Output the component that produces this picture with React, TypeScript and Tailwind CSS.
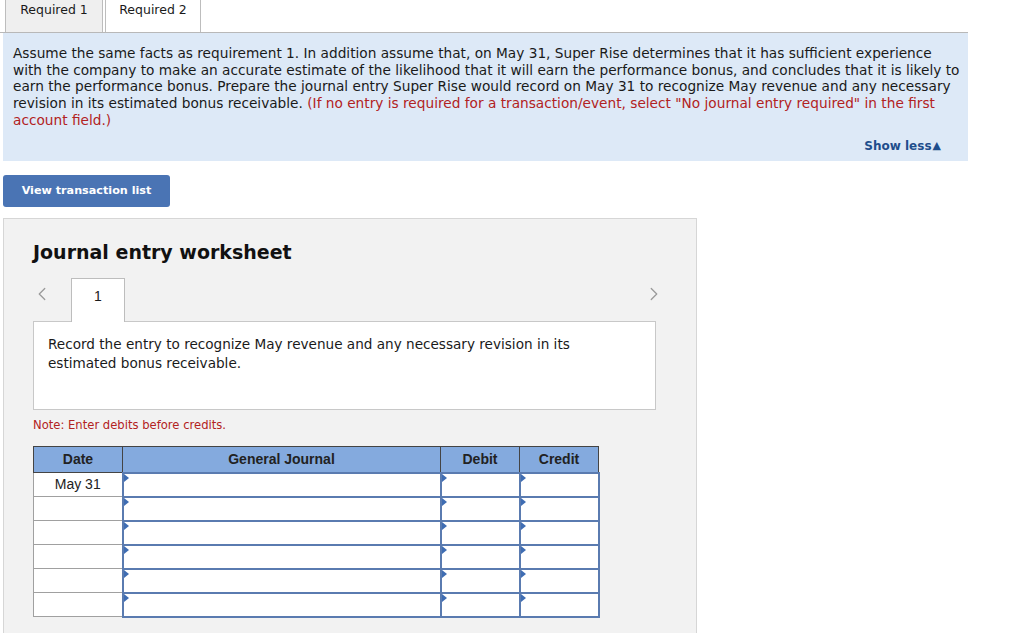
import { ChevronLeft, ChevronRight } from 'lucide-react'

const verdana = { fontFamily: '"DejaVu Sans", Verdana, sans-serif' }

function InputCell({ w }: { w: string }) {
  return (
    <td className={`${w} h-[24px] p-0 border-2 border-[#5a7bb0] bg-white relative`}>
      <span className="absolute left-0 top-0 w-0 h-0 border-t-[4px] border-b-[4px] border-l-[5px] border-t-transparent border-b-transparent border-l-[#3f6db3]" />
    </td>
  )
}

export default function App() {
  const rows = ['May 31', '', '', '', '', '']

  return (
    <div className="w-[1024px] h-[633px] overflow-hidden bg-white text-[#1a1a1a]" style={verdana}>
      {/* Tabs */}
      <div className="flex items-end h-[33px] pl-[5px] border-b border-[#b8b8b8] w-[968px]">
        <div className="w-[98px] h-[33px] flex justify-center pt-[1px] bg-[#efefef] border border-b-0 border-[#bdbdbd] text-[12.5px]">
          Required 1
        </div>
        <div className="ml-[2px] w-[96px] h-[33px] flex justify-center pt-[1px] bg-white border border-b-0 border-[#bdbdbd] text-[12.5px]">
          Required 2
        </div>
      </div>

      {/* Instructions */}
      <div className="ml-[3px] w-[965px] h-[128px] bg-[#dde9f7] pl-[10px] pr-[10px] pt-[12px] relative">
        <p className="text-[13.7px] leading-[16.7px] whitespace-nowrap">
          Assume the same facts as requirement 1. In addition assume that, on May 31, Super Rise determines that it has sufficient experience
          <br />
          with the company to make an accurate estimate of the likelihood that it will earn the performance bonus, and concludes that it is likely to
          <br />
          earn the performance bonus. Prepare the journal entry Super Rise would record on May 31 to recognize May revenue and any necessary
          <br />
          revision in its estimated bonus receivable.{' '}
          <span className="text-[#b22222]">(If no entry is required for a transaction/event, select "No journal entry required" in the first</span>
          <br />
          <span className="text-[#b22222]">account field.)</span>
        </p>
        <div className="absolute right-[27px] top-[104px] text-[12px] font-bold text-[#1f4e8c] flex items-center gap-[1px]">
          Show less<span className="text-[11px]">▲</span>
        </div>
      </div>

      {/* Button */}
      <button className="mt-[14px] ml-[3px] w-[167px] h-[32px] rounded-[3px] bg-[#4a74b4] text-white text-[11.2px] font-bold">
        View transaction list
      </button>

      {/* Worksheet */}
      <div className="mt-[11px] ml-[3px] w-[694px] h-[420px] bg-[#f2f2f2] border border-[#d6d6d6] pl-[29px] pt-[20px]">
        <h2 className="text-[19px] font-bold leading-[26px] text-[#111]">Journal entry worksheet</h2>

        <div className="mt-[13px] flex items-end w-[623px] h-[43px] relative">
          <ChevronLeft className="absolute left-[-2px] top-[5px] text-[#9a9a9a]" size={22} strokeWidth={1.4} />
          <div
            className="ml-[38px] w-[54px] h-[44px] -mb-px relative z-10 bg-white border border-b-0 border-[#bdbdbd] flex items-center justify-center text-[14px] pb-[9px]"
            style={{ fontFamily: '"Liberation Sans", Arial, sans-serif' }}
          >
            1
          </div>
          <ChevronRight className="absolute right-[-9px] top-[5px] text-[#9a9a9a]" size={22} strokeWidth={1.4} />
        </div>

        <div className="w-[623px] h-[89px] bg-white border border-[#c8c8c8] pl-[14px] pt-[13px] text-[13.6px] leading-[19px]">
          Record the entry to recognize May revenue and any necessary revision in its
          <br />
          estimated bonus receivable.
        </div>

        <p className="mt-[7px] text-[11.6px] text-[#b22222] leading-[16px]">Note: Enter debits before credits.</p>

        <table
          className="mt-[13px] border-collapse text-[14px]"
          style={{ fontFamily: '"Liberation Sans", Arial, sans-serif' }}
        >
          <thead>
            <tr className="bg-[#84aade] h-[26px]">
              <th className="w-[89px] border border-[#444] font-bold text-[#222]">Date</th>
              <th className="w-[318px] border border-[#444] font-bold text-[#222]">General Journal</th>
              <th className="w-[79px] border border-[#444] font-bold text-[#222]">Debit</th>
              <th className="w-[79px] border border-[#444] font-bold text-[#222]">Credit</th>
            </tr>
          </thead>
          <tbody>
            {rows.map((d, i) => (
              <tr key={i} className="h-[24px]">
                <td className="w-[89px] border border-[#a0a0a0] bg-white text-center text-[14px] text-[#222]">{d}</td>
                <InputCell w="w-[318px]" />
                <InputCell w="w-[79px]" />
                <InputCell w="w-[79px]" />
              </tr>
            ))}
          </tbody>
        </table>
      </div>
    </div>
  )
}
